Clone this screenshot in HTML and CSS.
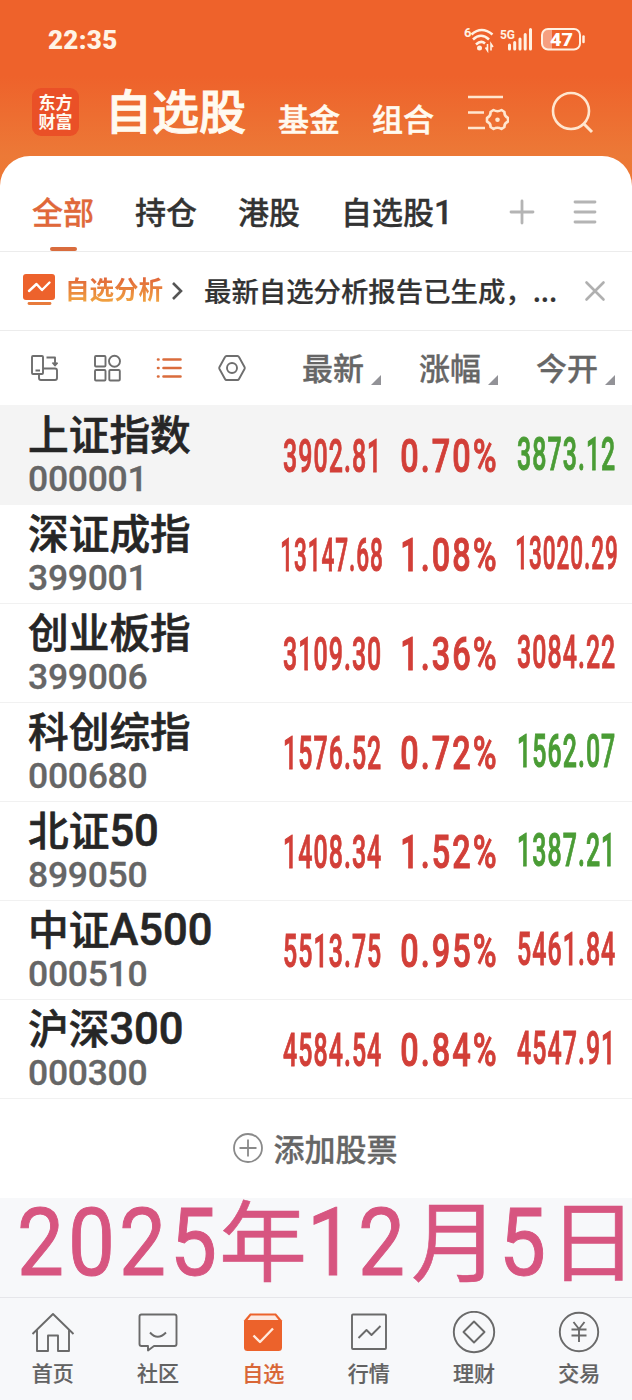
FILE: index.html
```
<!DOCTYPE html>
<html lang="zh-CN">
<head>
  <meta charset="UTF-8">
  <title>自选股</title>
  <meta name="viewport" content="width=device-width, initial-scale=1.0">
  <link rel="stylesheet" href="styles.css">
</head>
<body>
  <header class="top">
    <div class="status-bar">
      <span class="clock">22:35</span>
      <svg class="status-icons" width="124" height="28" viewBox="0 0 124 28" fill="none" stroke="#fff1e2">
        <text class="tiny" x="0" y="11">6</text>
        <g stroke-width="2.6">
          <path d="M7.500 8.500Q17.500 -.5 28.500 8.500"/>
          <path d="M9 13.500Q17 6 25 13.500"/>
          <path d="M12 18.500Q17 14 21 17.500"/>
        </g>
        <circle cx="15.500" cy="22" r="2.500" fill="#fff1e2" stroke="none"/>
        <path d="M23.500 18v6.500l-2-3M27 24.500v-6.500l2 3" stroke-width="1.600"/>
        <text class="tiny" x="36" y="13" textLength="15" lengthAdjust="spacingAndGlyphs">5G</text>
        <path d="M45.500 19v4M50.700 16.500v6.500M56 13v10M61.200 8.500v14.500M66.500 3.500v19.500" stroke-width="3" stroke-linecap="round"/>
        <path d="M88 3.500h-4a6 6 0 0 0-6 6v8a6 6 0 0 0 6 6h4z" fill="#f6a080" stroke="none"/>
        <rect x="78" y="3" width="38" height="20.500" rx="6" stroke-width="2"/>
        <path d="M119.500 10.500v5.500" stroke-width="2.500" stroke-linecap="round"/>
        <text class="level" x="86" y="20" textLength="23" lengthAdjust="spacingAndGlyphs">47</text>
      </svg>
    </div>
    <div class="title-bar">
      <div class="logo">东方<br>财富</div>
      <h1 class="title">自选股</h1>
      <span class="section fund">基金</span>
      <span class="section group">组合</span>
      <svg class="filter-icon" width="42" height="40" viewBox="0 0 42 40" fill="none" stroke="#ffe6cf" stroke-width="2.600">
        <path d="M1 4h35M1 19.500h16M1 35h17"/>
        <path d="M26.500 17q4 2.500 8 0l3 2q-.5 4 3.500 6v3.500q-4 2-3.500 5.500l-3 2q-4-2.500-8 0l-3-2q.5-3.500-3.500-5.500v-3.500q4-2 3.500-6z" stroke-linejoin="round"/>
        <circle cx="30.500" cy="26.700" r="2.300" fill="#ffe6cf" stroke="none"/>
      </svg>
      <svg class="search-icon" width="44" height="44" viewBox="0 0 44 44" fill="none" stroke="#ffe6cf" stroke-width="2.600">
        <circle cx="20" cy="20" r="18"/>
        <path d="M32.500 32.500l8.500 8.500" stroke-width="3"/>
      </svg>
    </div>
  </header>

  <main class="panel">
    <nav class="tabs">
      <span class="tab active">全部</span>
      <span class="tab">持仓</span>
      <span class="tab">港股</span>
      <span class="tab">自选股<i>1</i></span>
      <svg class="tab-plus" width="26" height="26" viewBox="0 0 26 26" stroke="#b4b4b4" stroke-width="2.800" stroke-linecap="round">
        <path d="M2 13h22M13 2v22"/>
      </svg>
      <svg class="tab-menu" width="24" height="26" viewBox="0 0 24 26" stroke="#b4b4b4" stroke-width="2.800" stroke-linecap="round">
        <path d="M2 3h20M2 13h20M2 23h20"/>
      </svg>
    </nav>

    <div class="notice">
      <svg class="notice-icon" width="32" height="32" viewBox="0 0 32 32" fill="none">
        <rect width="32" height="26" rx="3" fill="#ed622c"/>
        <path d="M6 17l7.500-7 5.500 6 7.500-7.500" stroke="#fff" stroke-width="2.400" stroke-linecap="round" stroke-linejoin="round"/>
        <path d="M6 29.500h21" stroke="#e87b3c" stroke-width="2.800" stroke-linecap="round"/>
      </svg>
      <span class="notice-tag">自选分析</span>
      <svg class="notice-arrow" width="12" height="20" viewBox="0 0 12 20" fill="none" stroke="#555" stroke-width="2.600">
        <path d="M2 2l8 8-8 8"/>
      </svg>
      <span class="notice-text">最新自选分析报告已生成，<span class="dots">...</span></span>
      <svg class="notice-close" width="22" height="22" viewBox="0 0 22 22" stroke="#b0b0b0" stroke-width="2.600" stroke-linecap="round">
        <path d="M2.500 2.500l17 17M19.500 2.500l-17 17"/>
      </svg>
    </div>

    <div class="toolbar">
      <div class="views">
        <svg width="28" height="28" viewBox="0 0 28 28" fill="none" stroke="#6e6e6e" stroke-width="1.900" stroke-linejoin="round">
          <rect x="2" y="2" width="11" height="18" rx="1"/>
          <path d="M5.500 16.500h4.500M16.500 3.500h8.500v7M22.500 8.500l2.500 3 2.500-3M13 14.500h12q2 0 2 2v7.500q0 2-2 2h-14q-2 0-2-2v-4"/>
        </svg>
        <svg width="28" height="28" viewBox="0 0 28 28" fill="none" stroke="#6e6e6e" stroke-width="1.900">
          <rect x="2" y="2" width="10.500" height="10.500" rx="1"/>
          <circle cx="21.500" cy="7.300" r="5.500"/>
          <rect x="2" y="16" width="10.500" height="10.500" rx="1"/>
          <rect x="16.300" y="16" width="10.500" height="10.500" rx="1"/>
        </svg>
        <svg width="28" height="28" viewBox="0 0 28 28" stroke="#da6c3c" stroke-width="2.600" stroke-linecap="round">
          <path d="M3 5.500h.5M8.500 5.500h17M3 14h.5M8.500 14h17M3 22.500h.5M8.500 22.500h17"/>
        </svg>
        <svg width="28" height="28" viewBox="0 0 28 28" fill="none" stroke="#6e6e6e" stroke-width="1.900" stroke-linejoin="round">
          <path d="M8.500 2h11q1 0 1.500 1l5.500 10q.5 1 0 2l-5.500 10q-.5 1-1.500 1h-11q-1 0-1.500-1l-5.500-10q-.5-1 0-2l5.500-10q.5-1 1.500-1z"/>
          <circle cx="14" cy="14" r="5"/>
        </svg>
      </div>
      <span class="sort">最新</span>
      <span class="sort">涨幅</span>
      <span class="sort">今开</span>
    </div>

    <ul class="stocks">
      <li class="stock pinned">
        <div class="info"><span class="name">上证指数</span><span class="code">000001</span></div>
        <span class="cell price"><b>3902.81</b></span>
        <span class="cell change"><b>0.70%</b></span>
        <span class="cell open down"><b>3873.12</b></span>
      </li>
      <li class="stock">
        <div class="info"><span class="name">深证成指</span><span class="code">399001</span></div>
        <span class="cell price long"><b>13147.68</b></span>
        <span class="cell change"><b>1.08%</b></span>
        <span class="cell open long"><b>13020.29</b></span>
      </li>
      <li class="stock">
        <div class="info"><span class="name">创业板指</span><span class="code">399006</span></div>
        <span class="cell price"><b>3109.30</b></span>
        <span class="cell change"><b>1.36%</b></span>
        <span class="cell open"><b>3084.22</b></span>
      </li>
      <li class="stock">
        <div class="info"><span class="name">科创综指</span><span class="code">000680</span></div>
        <span class="cell price"><b>1576.52</b></span>
        <span class="cell change"><b>0.72%</b></span>
        <span class="cell open down"><b>1562.07</b></span>
      </li>
      <li class="stock">
        <div class="info"><span class="name">北证<i>50</i></span><span class="code">899050</span></div>
        <span class="cell price"><b>1408.34</b></span>
        <span class="cell change"><b>1.52%</b></span>
        <span class="cell open down"><b>1387.21</b></span>
      </li>
      <li class="stock">
        <div class="info"><span class="name">中证<i>A500</i></span><span class="code">000510</span></div>
        <span class="cell price"><b>5513.75</b></span>
        <span class="cell change"><b>0.95%</b></span>
        <span class="cell open"><b>5461.84</b></span>
      </li>
      <li class="stock">
        <div class="info"><span class="name">沪深<i>300</i></span><span class="code">000300</span></div>
        <span class="cell price"><b>4584.54</b></span>
        <span class="cell change"><b>0.84%</b></span>
        <span class="cell open"><b>4547.91</b></span>
      </li>
    </ul>

    <div class="add">
      <svg width="30" height="30" viewBox="0 0 30 30" fill="none" stroke="#8a8a8a" stroke-width="1.800">
        <circle cx="15" cy="15" r="14"/>
        <path d="M6.500 15h17M15 6.500v17"/>
      </svg>
      <span>添加股票</span>
    </div>
  </main>

  <div class="date"><i class="year">2025</i>年<i class="month">12</i>月<i class="day">5</i><span class="last">日</span></div>

  <nav class="bottom-nav">
    <a class="nav-item">
      <svg width="44" height="44" viewBox="0 0 44 44">
        <path d="M1.500 23L22 3l20.500 20M6 19v21h11V24.500h10V40h11V19"/>
      </svg>
      <span>首页</span>
    </a>
    <a class="nav-item">
      <svg width="44" height="44" viewBox="0 0 44 44">
        <path d="M5.500 3.500h33q2 0 2 2v27.500q0 2-2 2H18l-6 4.500v-4.500H5.500q-2 0-2-2V5.500q0-2 2-2z"/>
        <path d="M14 21.500q7.500 8.500 16 0"/>
      </svg>
      <span>社区</span>
    </a>
    <a class="nav-item active">
      <svg width="44" height="44" viewBox="0 0 44 44">
        <path class="solid" d="M3 9.500L9 2.500h26l6 7v27q0 3.500-3.500 3.500h-31Q3 40 3 36.500z"/>
        <path class="lid" d="M10 4.500h24l3.500 4.500h-31z"/>
        <path class="tick" d="M12.500 24.500l6.500 6.500 13-13.500"/>
      </svg>
      <span>自选</span>
    </a>
    <a class="nav-item">
      <svg width="44" height="44" viewBox="0 0 44 44">
        <rect x="5" y="3.500" width="34" height="34.500" rx="1"/>
        <path d="M11.500 27l8-8 5 5 9-9"/>
      </svg>
      <span>行情</span>
    </a>
    <a class="nav-item">
      <svg width="44" height="44" viewBox="0 0 44 44">
        <circle cx="22" cy="21" r="20.200"/>
        <path d="M22 10.500L32.500 21 22 31.500 11.500 21z"/>
      </svg>
      <span>理财</span>
    </a>
    <a class="nav-item">
      <svg width="44" height="44" viewBox="0 0 44 44">
        <circle cx="22" cy="21" r="19.200"/>
        <path d="M16.500 11l5.500 7 5.500-7M14.500 18.500h15M14.500 24.500h15M22 18v13"/>
      </svg>
      <span>交易</span>
    </a>
  </nav>
</body>
</html>
```
FILE: styles.css
```
* {
  box-sizing: border-box;
}
html, body {
  margin: 0;
  padding: 0;
}
body {
  width: 632px;
  height: 1400px;
  overflow: hidden;
  background: #f7f8fa;
  font-family: "Noto Sans CJK SC", sans-serif;
  font-weight: 500;
  color: #333;
}
svg {
  display: block;
  flex: none;
}
i, b {
  font-style: normal;
}

/* header */
.top {
  height: 190px;
  background: linear-gradient(#ee622b 0, #ee622b 76px, #ec7937 156px, #ee7733 190px);
}
.status-bar {
  display: flex;
  justify-content: space-between;
  align-items: center;
  height: 80px;
  padding: 0 44px 0 48px;
}
.clock {
  font: 900 26px/30px Roboto, sans-serif;
  letter-spacing: 0.3px;
  color: #fff3e6;
}
.tiny {
  font: 700 13px Roboto, sans-serif;
  fill: #fff1e2;
  stroke: none;
}
.level {
  font: 900 19px Roboto, sans-serif;
  fill: #fff;
  stroke: none;
}
.title-bar {
  display: flex;
  height: 76px;
  padding-left: 32px;
  color: #fffaf0;
}
.logo {
  width: 47px;
  height: 48px;
  margin-top: 8px;
  padding-top: 4px;
  border-radius: 9px;
  background: #ea5027;
  font-size: 17px;
  font-weight: 700;
  line-height: 19px;
  text-align: center;
}
.title {
  margin: 0 0 0 26px;
  font-size: 47px;
  font-weight: 500;
  line-height: 58px;
  -webkit-text-stroke: 1px;
}
.section {
  font-size: 31px;
  line-height: 75px;
  -webkit-text-stroke: 0.5px;
}
.fund {
  margin-left: 32px;
}
.group {
  margin-left: 32px;
}
.filter-icon {
  margin: 13px 0 0 33px;
}
.search-icon {
  margin: 11px 0 0 42px;
}

/* white sheet */
.panel {
  height: 1042px;
  margin-top: -34px;
  border-radius: 30px 30px 0 0;
  background: #fff;
}
.tabs {
  display: flex;
  align-items: center;
  gap: 41px;
  height: 96px;
  padding: 16px 35px 0 32px;
  border-bottom: 1px solid #ececec;
}
.tab {
  height: 79px;
  font-size: 31px;
  line-height: 77px;
  -webkit-text-stroke: 0.3px;
}
.tab i {
  font-family: Roboto, sans-serif;
  font-size: 33px;
}
.tab.active {
  display: flex;
  flex-direction: column;
  align-items: center;
  color: #e0683a;
}
.tab.active::after {
  content: "";
  width: 27px;
  height: 4px;
  margin-top: -2px;
  border-radius: 2px;
  background: #d96c3d;
}
.tab-plus {
  margin-left: auto;
}
.tab-menu {
  margin-left: -3px;
}
.notice {
  display: flex;
  align-items: center;
  height: 79px;
  padding: 0 26px 0 23px;
  border-bottom: 1px solid #ececec;
}
.notice-icon {
  margin-top: -3px;
}
.notice-tag {
  margin: -4px 0 0 10px;
  font-size: 24.500px;
  font-weight: 700;
  line-height: 40px;
  background: linear-gradient(#e0653a 20%, #f0a040 80%);
  -webkit-background-clip: text;
  background-clip: text;
  color: transparent;
}
.notice-arrow {
  margin-left: 8px;
}
.notice-text {
  margin: -3px 0 0 21px;
  font-size: 27.400px;
  white-space: nowrap;
  -webkit-text-stroke: 0.2px;
}
.notice-close {
  margin-left: auto;
}
.toolbar {
  display: flex;
  align-items: center;
  height: 75px;
  padding: 0 0 2px 30px;
}
.views {
  display: flex;
  flex: none;
  gap: 34.500px;
  width: 272px;
}
.sort {
  display: flex;
  flex: none;
  align-items: flex-end;
  width: 117px;
  margin-top: -2px;
  font-size: 31px;
  line-height: 44px;
  color: #666;
  -webkit-text-stroke: 0.3px;
}
.sort::after {
  content: "";
  margin: 0 0 4px 7px;
  border-left: 10px solid transparent;
  border-bottom: 10px solid #929297;
}

/* quotes */
.stocks {
  margin: 0;
  padding: 0;
  list-style: none;
}
.stock {
  display: flex;
  align-items: center;
  height: 99px;
  padding-left: 28px;
  border-bottom: 1px solid #f1f1f1;
}
.stock.pinned {
  height: 100px;
  margin-top: -1px;
  padding-top: 1px;
  border-color: #f4f4f4;
  background: #f4f4f4;
}
.info {
  display: flex;
  flex: none;
  flex-direction: column;
  width: 246px;
  height: 98px;
}
.name {
  height: 53px;
  font-size: 40.700px;
  line-height: 54px;
  color: #262626;
  -webkit-text-stroke: 0.6px;
}
.name i {
  font-family: Roboto, sans-serif;
  font-size: 43.500px;
}
.code {
  font: 500 35.500px/40px Roboto, sans-serif;
  letter-spacing: -0.3px;
  color: #666;
  -webkit-text-stroke: 0.3px;
}
.cell {
  display: flex;
  flex: none;
  justify-content: center;
  width: 117px;
  padding-top: 2px;
  font: 500 47px/50px Roboto, sans-serif;
  color: #d23f38;
}
.cell b {
  font-weight: 500;
  letter-spacing: 2px;
  transform: scaleX(0.53);
  -webkit-text-stroke: 1px;
}
.cell.long b {
  transform: scaleX(0.48);
}
.cell.change b {
  letter-spacing: 3px;
  transform: scaleX(0.69);
}
.cell.open {
  padding: 0 0 3px 1px;
}
.cell.down {
  color: #4a9c35;
}
.add {
  display: flex;
  justify-content: center;
  align-items: center;
  gap: 11px;
  height: 98px;
  padding-right: 2px;
  font-size: 31px;
  line-height: 40px;
  color: #666;
  -webkit-text-stroke: 0.3px;
}

.date {
  display: flex;
  height: 99px;
  padding-left: 17px;
  font-size: 88px;
  font-weight: 400;
  line-height: 75px;
  white-space: nowrap;
  color: #d75580;
  -webkit-text-stroke: 0.6px;
}
.date i {
  flex: none;
  font-family: Roboto, sans-serif;
  font-size: 94px;
  line-height: 90px;
  letter-spacing: 4.500px;
  transform: scaleX(0.89);
  transform-origin: 0 0;
  -webkit-text-stroke: 1px;
}
.date .year {
  width: 202px;
}
.date .month {
  width: 104px;
}
.date .day {
  width: 50px;
}
.date .last {
  width: 80px;
  letter-spacing: -8px;
}

.bottom-nav {
  display: grid;
  grid-template-columns: repeat(6, 1fr);
  height: 103px;
  padding-top: 13px;
  border-top: 1px solid #e6e6ea;
}
.nav-item {
  display: flex;
  flex-direction: column;
  align-items: center;
  font-size: 21px;
  line-height: 34px;
  color: #626262;
  -webkit-text-stroke: 0.2px;
}
.nav-item svg {
  fill: none;
  stroke: #6a6a6a;
  stroke-width: 1.900;
  stroke-linejoin: round;
}
.nav-item.active {
  color: #d96636;
}
.nav-item .solid {
  fill: #ec622b;
  stroke: none;
}
.nav-item .lid {
  fill: #fbe9e2;
  stroke: none;
}
.nav-item .tick {
  stroke: #ffe9dc;
  stroke-width: 2.400;
}
```
